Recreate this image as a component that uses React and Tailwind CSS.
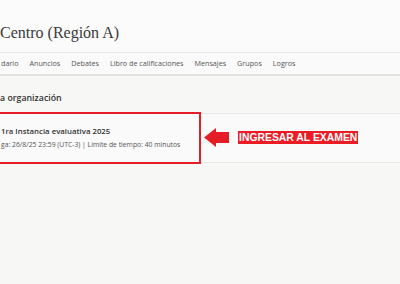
import React from 'react';

const navItems = ['dario', 'Anuncios', 'Debates', 'Libro de calificaciones', 'Mensajes', 'Grupos', 'Logros'];

const App = () => {
  return (
    <div className="w-[400px] h-[284px] overflow-hidden bg-[#f7f7f5] font-['Open_Sans',sans-serif] text-[#333]">
      {/* Course header */}
      <div className="h-[52px] bg-[#fbfbfb] flex items-end pb-[11px]">
        <h1 className="font-['Liberation_Serif',serif] text-[16px] leading-none text-[#3a3a3a] whitespace-nowrap">
          Centro (Región A)
        </h1>
      </div>

      {/* Course nav */}
      <nav className="h-[24px] bg-[#fafafa] border-t border-[#e8e8e8] border-b-2 border-b-[#e3e3e3] flex items-center gap-[11px] pl-[1px] whitespace-nowrap">
        {navItems.map((item) => (
          <span key={item} className="text-[7.2px] text-[#555]">{item}</span>
        ))}
      </nav>

      {/* Content */}
      <div className="pt-[18px]">
        <h2 className="text-[8.8px] font-semibold leading-none text-[#333] whitespace-nowrap">a organización</h2>

        <div className="mt-[10px] h-[50px] bg-[#fafafa] border-y border-[#e8e8e8] flex items-center">
          <div className="w-[201px] h-[52px] -my-[1px] border-2 border-l-0 border-[#e51d27] flex flex-col justify-center pl-[1px] gap-[6px] pt-[1px]">
            <span className="text-[7.8px] font-semibold leading-none text-[#333] whitespace-nowrap">1ra Instancia evaluativa 2025</span>
            <span className="text-[6.8px] leading-none text-[#555] whitespace-nowrap">ga: 26/8/25 23:59 (UTC-3) | Límite de tiempo: 40 minutos</span>
          </div>

          <svg className="ml-[3px]" width="26" height="19" viewBox="0 0 26 19">
            <polygon points="0,9.5 12,0 12,4 25,4 25,15 12,15 12,19" fill="#e51d27" />
          </svg>

          <span className="ml-[8px] bg-[#ec1c24] px-[1px] text-[10.4px] font-bold leading-[13px] text-white font-['Liberation_Sans',sans-serif] whitespace-nowrap">
            INGRESAR AL EXAMEN
          </span>
        </div>
      </div>
    </div>
  );
};

export default App;
